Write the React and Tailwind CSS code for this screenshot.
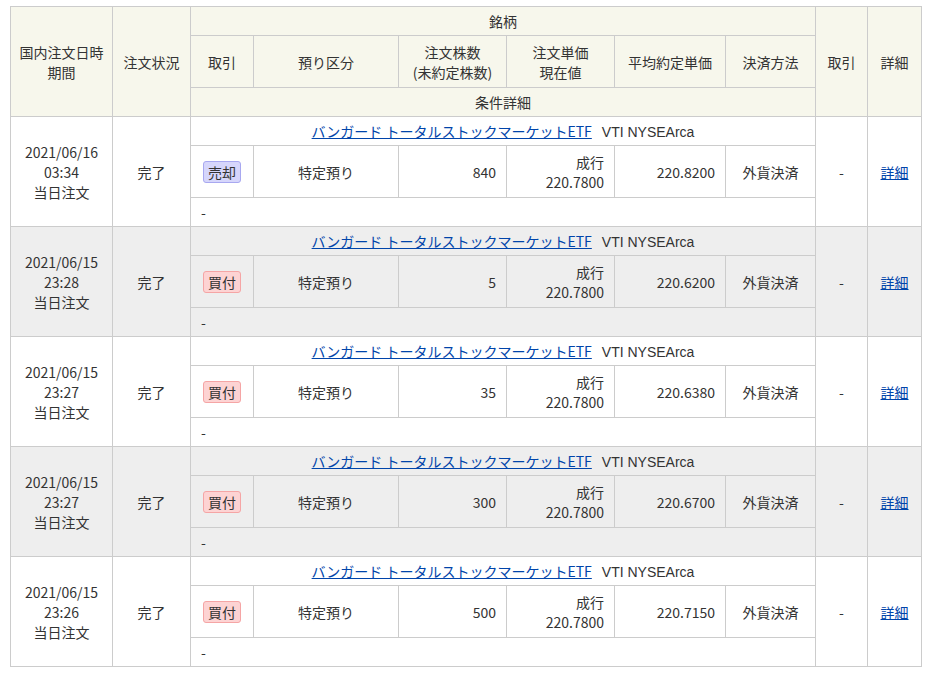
const rows = [
  { d: "2021/06/16", t: "03:34", side: "売却", qty: "840", avg: "220.8200" },
  { d: "2021/06/15", t: "23:28", side: "買付", qty: "5", avg: "220.6200" },
  { d: "2021/06/15", t: "23:27", side: "買付", qty: "35", avg: "220.6380" },
  { d: "2021/06/15", t: "23:27", side: "買付", qty: "300", avg: "220.6700" },
  { d: "2021/06/15", t: "23:26", side: "買付", qty: "500", avg: "220.7150" },
];

const td = "border border-[#cccccc] p-0";
const th = "border border-[#cccccc] bg-[#f7f7ec] font-normal p-0";

export default function App() {
  return (
    <div className="bg-white w-[926px] h-[674px] pt-[6px] pl-[10px] text-[14px] text-[#333] leading-[20px]" style={{ fontFamily: '"Noto Sans CJK JP", sans-serif' }}>
      <table className="border-collapse table-fixed w-[912px]">
        <colgroup>
          {[102, 78, 63, 145, 108, 108, 111, 90, 52, 54].map((w, i) => <col key={i} style={{ width: w }} />)}
        </colgroup>
        <thead>
          <tr className="h-[29px]">
            <th rowSpan={3} className={th}>国内注文日時<br />期間</th>
            <th rowSpan={3} className={th}>注文状況</th>
            <th colSpan={6} className={th}>銘柄</th>
            <th rowSpan={3} className={th}>取引</th>
            <th rowSpan={3} className={th}>詳細</th>
          </tr>
          <tr className="h-[52px]">
            <th className={th}>取引</th>
            <th className={th}>預り区分</th>
            <th className={th}>注文株数<br />(未約定株数)</th>
            <th className={th}>注文単価<br />現在値</th>
            <th className={th}>平均約定単価</th>
            <th className={th}>決済方法</th>
          </tr>
          <tr className="h-[29px]">
            <th colSpan={6} className={th}>条件詳細</th>
          </tr>
        </thead>
        <tbody>
          {rows.map((r, i) => {
            const bg = i % 2 ? "bg-[#eeeeee]" : "bg-white";
            const sell = r.side === "売却";
            return [
              <tr key={i + "a"} className={`h-[29px] ${bg}`}>
                <td rowSpan={3} className={`${td} text-center`}>{r.d}<br />{r.t}<br />当日注文</td>
                <td rowSpan={3} className={`${td} text-center`}>完了</td>
                <td colSpan={6} className={`${td} text-center`}>
                  <a className="text-[#0044aa] underline">バンガード トータルストックマーケットETF</a>
                  <span className="ml-[10px]" style={{ fontFamily: '"Liberation Sans", sans-serif' }}>VTI NYSEArca</span>
                </td>
                <td rowSpan={3} className={`${td} text-center`}>-</td>
                <td rowSpan={3} className={`${td} text-center`}><a className="text-[#0044aa] underline">詳細</a></td>
              </tr>,
              <tr key={i + "b"} className={`h-[52px] ${bg}`}>
                <td className={`${td} text-center`}>
                  <span className={`inline-block px-[4px] leading-[20px] rounded-[3px] border ${sell ? "bg-[#d6d6fb] border-[#a8a8f0]" : "bg-[#fdd3d3] border-[#f5a5a5]"}`}>{r.side}</span>
                </td>
                <td className={`${td} text-center`}>特定預り</td>
                <td className={`${td} text-right pr-[10px]`}>{r.qty}</td>
                <td className={`${td} text-right pr-[10px]`}>成行<br />220.7800</td>
                <td className={`${td} text-right pr-[10px]`}>{r.avg}</td>
                <td className={`${td} text-center`}>外貨決済</td>
              </tr>,
              <tr key={i + "c"} className={`h-[29px] ${bg}`}>
                <td colSpan={6} className={`${td} pl-[10px]`}>-</td>
              </tr>,
            ];
          })}
        </tbody>
      </table>
    </div>
  );
}
